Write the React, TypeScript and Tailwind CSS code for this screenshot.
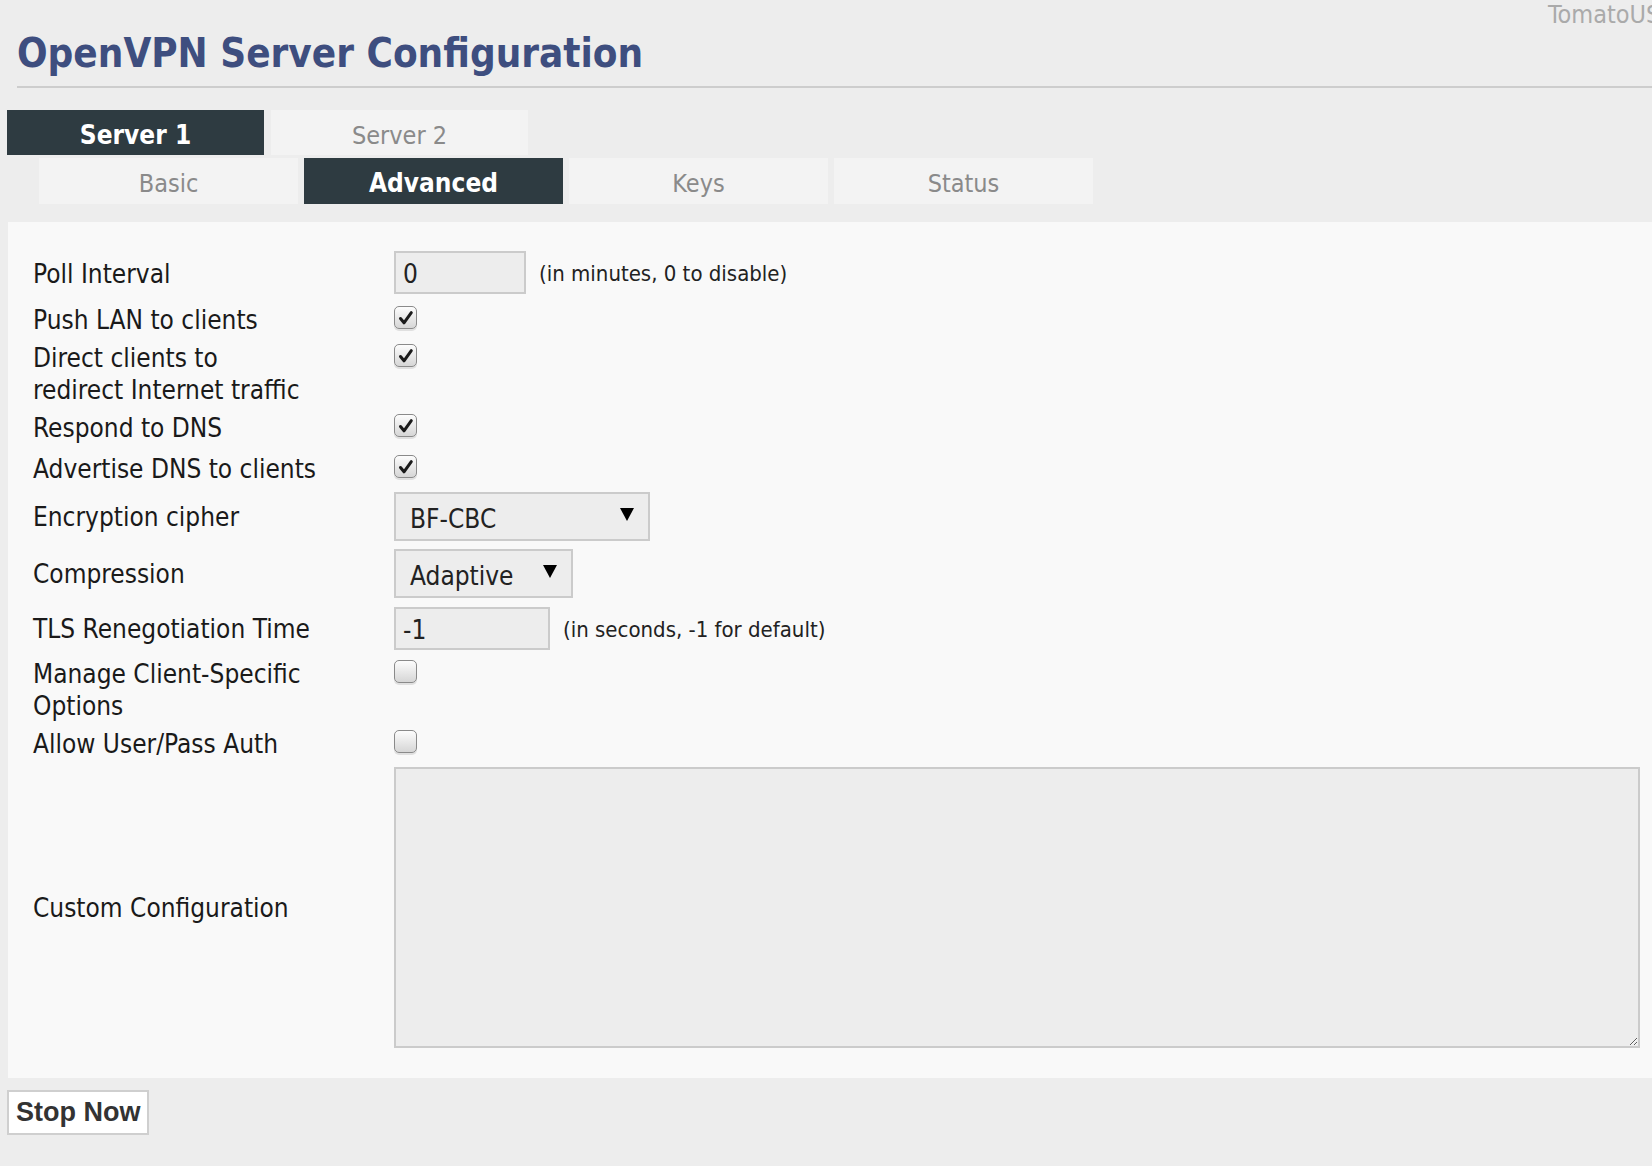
import React from "react";

/* little drawings */
function Check({ on }: { on: boolean }) {
  return (
    <div className="mt-[2px] flex h-[23px] w-[23px] items-center justify-center rounded-[5px] border border-[#8a8a8a] bg-gradient-to-b from-[#fdfdfd] to-[#d6d6d6] shadow-[0_2px_0_#e0e0e0]">
      {on ? (
        <svg viewBox="0 0 16 16" className="h-[16px] w-[16px]">
          <path d="M2.5 8.5 L6 12.8 L13.3 2.6" fill="none" stroke="#1a1a1a" strokeWidth="3" strokeLinecap="round" strokeLinejoin="round" />
        </svg>
      ) : null}
    </div>
  );
}

function Arrow() {
  return (
    <svg viewBox="0 0 14 13" className="h-[13px] w-[14px]">
      <polygon points="0,0 14,0 7,13" fill="#000" />
    </svg>
  );
}

function Select({ value, w }: { value: string; w: string }) {
  return (
    <div className={`${w} flex h-[49px] items-center justify-between border-2 border-[#cbcbcb] bg-[#ededed] pl-[14px] pr-[14px] text-[26px] text-[#222]`}>
      <span className="pt-[4px]">{value}</span>
      <span className="mb-[4px]">
        <Arrow />
      </span>
    </div>
  );
}

function Input({ value, w }: { value: string; w: string }) {
  return (
    <div className={`${w} flex h-[43px] items-center border-2 border-[#cbcbcb] bg-[#ededed] pl-[7px] pt-[2px] text-[26px] text-[#222]`}>
      {value}
    </div>
  );
}

const tabs1 = [
  { text: "Server 1", active: true },
  { text: "Server 2", active: false },
];
const tabs2 = [
  { text: "Basic", active: false },
  { text: "Advanced", active: true },
  { text: "Keys", active: false },
  { text: "Status", active: false },
];

export default function App() {
  return (
    <div className="relative min-h-screen overflow-hidden bg-[#ededed] font-['DejaVu_Sans_Condensed','Liberation_Sans',sans-serif] text-[#1a1a1a]">
      {/* corner brand, runs off the right edge like the real page */}
      <div className="absolute left-[1548px] top-0 whitespace-nowrap text-[25px] leading-[30px] text-[#aaaaaa]">TomatoUSB</div>

      <h1 className="ml-[17px] pt-[33px] text-[40px] font-bold leading-[40px] text-[#3e4e7f]">OpenVPN Server Configuration</h1>
      <div className="ml-[17px] mt-[13px] h-[2px] bg-[#cdcdcd]" />

      {/* server tabs */}
      <div className="ml-[7px] mt-[22px] flex gap-[7px]">
        {tabs1.map((t) => (
          <div
            key={t.text}
            className={[
              "flex h-[45px] w-[257px] items-center justify-center pt-[6px]",
              t.active ? "bg-[#2e3b41] text-[26px] font-bold text-white" : "bg-[#f3f3f3] text-[25px] text-[#8a8a8a]",
            ].join(" ")}
          >
            {t.text}
          </div>
        ))}
      </div>

      {/* sub tabs */}
      <div className="ml-[39px] mt-[3px] flex gap-[6px]">
        {tabs2.map((t) => (
          <div
            key={t.text}
            className={[
              "flex h-[46px] w-[259px] items-center justify-center pt-[5px]",
              t.active ? "bg-[#2e3b41] text-[26px] font-bold text-white" : "bg-[#f3f3f3] text-[25px] text-[#8a8a8a]",
            ].join(" ")}
          >
            {t.text}
          </div>
        ))}
      </div>

      {/* form panel */}
      <div className="ml-[8px] mt-[18px] bg-[#f9f9f9] pb-[26px] pl-[25px] pr-[12px] pt-[26px] text-[26px] leading-[32px]">
        <div className="grid grid-cols-[361px_1fr]">
          {/* Poll interval */}
          <div className="pt-[10px]">Poll Interval</div>
          <div className="flex h-[53px] items-start pt-[3px]">
            <Input value="0" w="w-[132px]" />
            <span className="ml-[13px] mt-[9px] text-[22px] leading-[28px] text-[#222]">(in minutes, 0 to disable)</span>
          </div>

          <div className="py-[3px]">Push LAN to clients</div>
          <div className="py-[3px]">
            <Check on />
          </div>

          <div className="py-[3px]">
            Direct clients to
            <br />
            redirect Internet traffic
          </div>
          <div className="py-[3px]">
            <Check on />
          </div>

          <div className="pb-[6px] pt-[3px]">Respond to DNS</div>
          <div className="pb-[6px] pt-[3px]">
            <Check on />
          </div>

          <div className="py-[3px]">Advertise DNS to clients</div>
          <div className="py-[3px]">
            <Check on />
          </div>

          <div className="flex items-center">Encryption cipher</div>
          <div className="py-[4px]">
            <Select value="BF-CBC" w="w-[256px]" />
          </div>

          <div className="flex items-center">Compression</div>
          <div className="py-[4px]">
            <Select value="Adaptive" w="w-[179px]" />
          </div>

          <div className="flex items-center">TLS Renegotiation Time</div>
          <div className="flex h-[53px] items-center">
            <Input value="-1" w="w-[156px]" />
            <span className="ml-[13px] mt-[2px] text-[22px] leading-[28px] text-[#222]">(in seconds, -1 for default)</span>
          </div>

          <div className="py-[3px]">
            Manage Client-Specific
            <br />
            Options
          </div>
          <div className="py-[3px]">
            <Check on={false} />
          </div>

          <div className="py-[3px]">Allow User/Pass Auth</div>
          <div className="py-[3px]">
            <Check on={false} />
          </div>

          <div className="flex items-center">Custom Configuration</div>
          <div className="flex py-[4px]">
            <textarea className="block h-[281px] w-full border-2 border-[#cbcbcb] bg-[#ededed] outline-none" defaultValue="" />
          </div>
        </div>
      </div>

      <button className="ml-[7px] mt-[12px] border-2 border-[#cfcfcf] bg-white px-[7px] py-[5px] font-['Liberation_Sans',sans-serif] text-[27px] font-bold leading-[31px] text-[#333]">
        Stop Now
      </button>
    </div>
  );
}
